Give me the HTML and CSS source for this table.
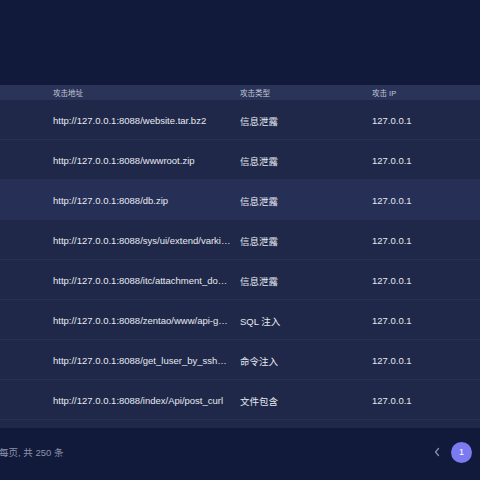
FILE: index.html
```html
<!DOCTYPE html>
<html lang="zh">
<head>
<meta charset="utf-8">
<link rel="stylesheet" href="styles.css">
</head>
<body>
<div class="page">
  <div class="top"></div>
  <div class="table">
    <div class="thead">
      <div class="cell c1">攻击地址</div>
      <div class="cell c2">攻击类型</div>
      <div class="cell c3">攻击 IP</div>
    </div>
    <div class="tbody">
      <div class="row">
        <div class="cell c1">http://127.0.0.1:8088/website.tar.bz2</div>
        <div class="cell c2">信息泄露</div>
        <div class="cell c3">127.0.0.1</div>
      </div>
      <div class="row">
        <div class="cell c1">http://127.0.0.1:8088/wwwroot.zip</div>
        <div class="cell c2">信息泄露</div>
        <div class="cell c3">127.0.0.1</div>
      </div>
      <div class="row hover">
        <div class="cell c1">http://127.0.0.1:8088/db.zip</div>
        <div class="cell c2">信息泄露</div>
        <div class="cell c3">127.0.0.1</div>
      </div>
      <div class="row">
        <div class="cell c1">http://127.0.0.1:8088/sys/ui/extend/varkittengine/varkitengine.jsp</div>
        <div class="cell c2">信息泄露</div>
        <div class="cell c3">127.0.0.1</div>
      </div>
      <div class="row">
        <div class="cell c1">http://127.0.0.1:8088/itc/attachment_download.php</div>
        <div class="cell c2">信息泄露</div>
        <div class="cell c3">127.0.0.1</div>
      </div>
      <div class="row">
        <div class="cell c1">http://127.0.0.1:8088/zentao/www/api-getModel-editor</div>
        <div class="cell c2">SQL 注入</div>
        <div class="cell c3">127.0.0.1</div>
      </div>
      <div class="row">
        <div class="cell c1">http://127.0.0.1:8088/get_luser_by_sshport.php</div>
        <div class="cell c2">命令注入</div>
        <div class="cell c3">127.0.0.1</div>
      </div>
      <div class="row">
        <div class="cell c1">http://127.0.0.1:8088/index/Api/post_curl</div>
        <div class="cell c2">文件包含</div>
        <div class="cell c3">127.0.0.1</div>
      </div>
      <div class="row">
        <div class="cell c1">http://127.0.0.1:8088/index.php</div>
        <div class="cell c2">信息泄露</div>
        <div class="cell c3">127.0.0.1</div>
      </div>
    </div>
  </div>
  <div class="pager">
    <div class="total">每页, 共 250 条</div>
    <div class="pages">
      <span class="prev"><svg width="8" height="10" viewBox="0 0 8 10"><path d="M5.5 1.5 L2.5 5 L5.5 8.5" fill="none" stroke="#8d93ab" stroke-width="1.2" stroke-linecap="round" stroke-linejoin="round"/></svg></span>
      <span class="num">1</span>
    </div>
  </div>
</div>
</body>
</html>
```
FILE: styles.css
```css
html, body {
  margin: 0;
  padding: 0;
  background: #121a3b;
}
.page {
  width: 480px;
  height: 480px;
  overflow: hidden;
  font-family: "Liberation Sans", "Noto Sans CJK SC", sans-serif;
  color: #e6e9f2;
}
.top {
  height: 85px;
  background: #121a3b;
}
.thead {
  display: grid;
  grid-template-columns: 240px 132px 1fr;
  height: 15px;
  align-items: center;
  background: #2a3458;
  color: #c3c8d8;
  font-size: 7.5px;
}
.tbody {
  height: 328px;
  overflow: hidden;
  background: #1f2848;
}
.row {
  display: grid;
  grid-template-columns: 240px 132px 1fr;
  height: 39px;
  padding-top: 2px;
  box-sizing: border-box;
  height: 40px;
  align-items: center;
  border-bottom: 1px solid #283152;
  font-size: 9.5px;
}
.row.hover {
  background: #262f55;
}
.cell {
  white-space: nowrap;
  overflow: hidden;
  text-overflow: ellipsis;
}
.c1 {
  padding-left: 53px;
  padding-right: 8px;
}
.pager {
  height: 52px;
  box-sizing: border-box;
  padding-bottom: 4px;
  display: flex;
  align-items: center;
  justify-content: space-between;
  padding-right: 8px;
  background: #121a3b;
}
.total {
  font-size: 9.5px;
  color: #8d93ab;
  margin-left: -1px;
}
.pages {
  display: flex;
  align-items: center;
  gap: 10px;
}
.prev {
  display: flex;
  align-items: center;
}
.num {
  width: 21px;
  height: 21px;
  border-radius: 50%;
  background: #7c7af0;
  color: #ffffff;
  font-size: 9px;
  display: flex;
  align-items: center;
  justify-content: center;
}
```
